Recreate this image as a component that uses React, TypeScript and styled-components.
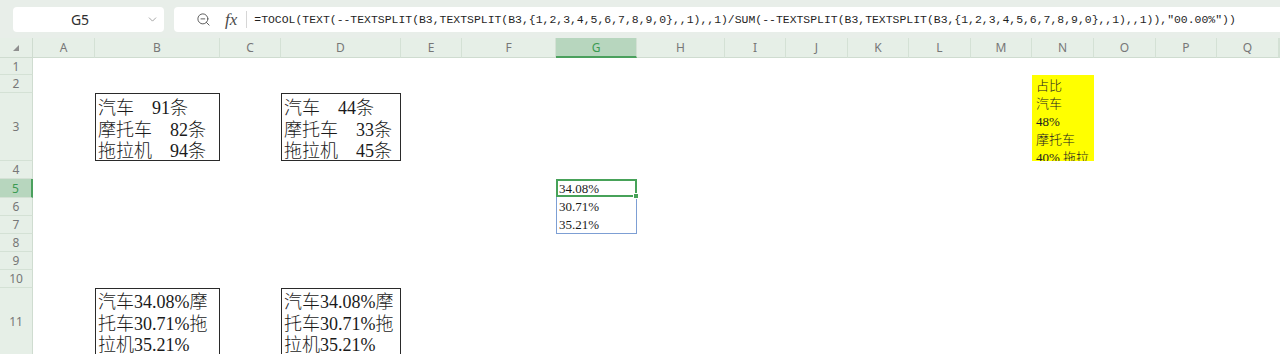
import styled, { createGlobalStyle } from "styled-components";
import { ZoomOut, ChevronDown } from "lucide-react";

const GlobalStyle = createGlobalStyle`
	html, body {
		margin: 0;
		padding: 0;
		background: #ffffff;
		overflow: hidden;
	}
	body {
		font-family: "Noto Sans", "Noto Sans CJK SC", sans-serif;
	}
`;

const COLS: { name: string; w: number }[] = [
	{ name: "A", w: 62 },
	{ name: "B", w: 125 },
	{ name: "C", w: 61 },
	{ name: "D", w: 120 },
	{ name: "E", w: 61 },
	{ name: "F", w: 94 },
	{ name: "G", w: 81 },
	{ name: "H", w: 88 },
	{ name: "I", w: 61 },
	{ name: "J", w: 62 },
	{ name: "K", w: 61 },
	{ name: "L", w: 62 },
	{ name: "M", w: 61 },
	{ name: "N", w: 62 },
	{ name: "O", w: 62 },
	{ name: "P", w: 61 },
	{ name: "Q", w: 62 },
];

const ROWS = [17, 18, 68, 18, 19, 18, 18, 18, 18, 18, 68];

const FORMULA =
	'=TOCOL(TEXT(--TEXTSPLIT(B3,TEXTSPLIT(B3,{1,2,3,4,5,6,7,8,9,0},,1),,1)/SUM(--TEXTSPLIT(B3,TEXTSPLIT(B3,{1,2,3,4,5,6,7,8,9,0},,1),,1)),"00.00%"))';

// grid area of a sheet range, e.g. area("G", 5, 3) -> G5:G7
const area = (col: string, row: number, rows = 1) => {
	const c = COLS.findIndex((x) => x.name === col) + 2;
	const r = row + 1;
	return `${r} / ${c} / ${r + rows} / ${c + 1}`;
};

const Page = styled.div`
	width: 1280px;
	height: 354px;
	overflow: hidden;
	background: #ffffff;
`;

const TopBar = styled.div`
	height: 38px;
	display: flex;
	align-items: center;
	gap: 10px;
	padding-left: 13px;
	background: #e8eee9;
	box-sizing: border-box;
`;

const NameBox = styled.div`
	width: 151px;
	height: 25px;
	display: flex;
	align-items: center;
	background: #ffffff;
	border-radius: 4px;
	box-sizing: border-box;
	padding-right: 5px;
	color: #8a8a8a;
`;

const NameText = styled.span`
	flex: 1;
	text-align: center;
	font-size: 14px;
	color: #2e2e2e;
	padding-left: 1px;
`;

const FormulaBox = styled.div`
	flex: 1;
	height: 25px;
	display: flex;
	align-items: center;
	background: #ffffff;
	border-radius: 4px 0 0 4px;
	padding-left: 22px;
	color: #555555;
	min-width: 0;
`;

const Fx = styled.span`
	margin-left: 14px;
	font-family: "Liberation Serif", serif;
	font-style: italic;
	font-size: 17px;
	color: #4a4a4a;
	line-height: 1;
`;

const Divider = styled.span`
	width: 1px;
	height: 17px;
	margin-left: 9px;
	background: #d6d6d6;
`;

const FormulaText = styled.span`
	margin-left: 7px;
	font-family: "Liberation Mono", monospace;
	font-size: 11.45px;
	color: #1f1f1f;
	white-space: pre;
`;

const Sheet = styled.div`
	display: grid;
	grid-template-columns: 33px ${COLS.map((c) => c.w + "px").join(" ")} 1fr;
	grid-template-rows: 20px ${ROWS.map((h) => h + "px").join(" ")};
	background: #ffffff;
`;

const Corner = styled.div`
	grid-area: 1 / 1 / 2 / 2;
	display: flex;
	align-items: center;
	justify-content: center;
	background: #e6efe7;
	border-right: 1px solid #cfdcd0;
	border-bottom: 1px solid #cfdcd0;
	box-sizing: border-box;
`;

const ColHeader = styled.div<{ $active?: boolean }>`
	grid-row: 1;
	display: flex;
	align-items: center;
	justify-content: center;
	font-size: 12px;
	color: ${(p) => (p.$active ? "#3b9a52" : "#777777")};
	background: ${(p) => (p.$active ? "#b7d6be" : "#e6efe7")};
	border-right: 1px solid #d4e1d5;
	border-bottom: ${(p) => (p.$active ? "2px solid #4aa05d" : "1px solid #cfdcd0")};
	box-sizing: border-box;
`;

const RowHeader = styled.div<{ $active?: boolean }>`
	grid-column: 1;
	display: flex;
	align-items: center;
	justify-content: center;
	font-size: 12px;
	color: ${(p) => (p.$active ? "#3b9a52" : "#777777")};
	background: ${(p) => (p.$active ? "#b7d6be" : "#e6efe7")};
	border-bottom: 1px solid #d4e1d5;
	border-right: ${(p) => (p.$active ? "2px solid #4aa05d" : "1px solid #cfdcd0")};
	box-sizing: border-box;
`;

const TextBox = styled.div<{ $area: string; $padTop: number }>`
	grid-area: ${(p) => p.$area};
	border: 1px solid #2a2a2a;
	padding: ${(p) => p.$padTop}px 0 0 2px;
	font-family: "Liberation Serif", "Noto Sans CJK SC", serif;
	font-weight: 300;
	font-size: 18px;
	line-height: 21.5px;
	color: #1a1a1a;
	white-space: pre;
	overflow: hidden;
	box-sizing: border-box;
`;

const ValueCell = styled.div<{ $area: string }>`
	grid-area: ${(p) => p.$area};
	display: flex;
	align-items: center;
	padding-left: 3px;
	font-family: "Liberation Serif", serif;
	font-size: 13px;
	color: #1a1a1a;
`;

const NoteCell = styled.div<{ $area: string }>`
	grid-area: ${(p) => p.$area};
	background: #ffff00;
	padding: 2px 3px 0 4px;
	font-family: "Liberation Serif", "Noto Sans CJK SC", serif;
	font-weight: 300;
	font-size: 13px;
	line-height: 18px;
	color: #222222;
	overflow: hidden;
`;

const SpillFrame = styled.div<{ $area: string }>`
	grid-area: ${(p) => p.$area};
	border: 1px solid #7d9fd4;
	box-sizing: border-box;
	pointer-events: none;
`;

const Selection = styled.div<{ $area: string }>`
	grid-area: ${(p) => p.$area};
	position: relative;
	border: 2px solid #47a259;
	box-sizing: border-box;
	margin-bottom: 1px;
	pointer-events: none;
`;

const Handle = styled.span`
	position: absolute;
	right: -4px;
	bottom: -4px;
	width: 4px;
	height: 4px;
	background: #47a259;
	border: 1px solid #ffffff;
`;

function App() {
	return (
		<Page>
			<GlobalStyle />
			<TopBar>
				<NameBox>
					<NameText>G5</NameText>
					<ChevronDown size={13} strokeWidth={1.4} />
				</NameBox>
				<FormulaBox>
					<ZoomOut size={15} strokeWidth={1.5} />
					<Fx>fx</Fx>
					<Divider />
					<FormulaText>{FORMULA}</FormulaText>
				</FormulaBox>
			</TopBar>
			<Sheet>
				<Corner>
					<svg width="6" height="6" viewBox="0 0 6 6">
						<polygon points="6,0 6,6 0,6" fill="#8f8f8f" />
					</svg>
				</Corner>
				{COLS.map((c, i) => (
					<ColHeader key={c.name} $active={c.name === "G"} style={{ gridColumn: i + 2 }}>
						{c.name}
					</ColHeader>
				))}
				<ColHeader style={{ gridColumn: COLS.length + 2 }} />
				{ROWS.map((_, i) => (
					<RowHeader key={i} $active={i + 1 === 5} style={{ gridRow: i + 2 }}>
						{i + 1}
					</RowHeader>
				))}

				<TextBox $area={area("B", 3)} $padTop={4}>
					{"汽车\u300091条\n摩托车\u300082条\n拖拉机\u300094条"}
				</TextBox>
				<TextBox $area={area("D", 3)} $padTop={4}>
					{"汽车\u300044条\n摩托车\u300033条\n拖拉机\u300045条"}
				</TextBox>

				<NoteCell $area={area("N", 2, 2)}>
					占比
					<br />
					汽车
					<br />
					48%
					<br />
					摩托车
					<br />
					40% 拖拉机 39%
				</NoteCell>

				<ValueCell $area={area("G", 5)}>34.08%</ValueCell>
				<ValueCell $area={area("G", 6)}>30.71%</ValueCell>
				<ValueCell $area={area("G", 7)}>35.21%</ValueCell>

				<TextBox $area={area("B", 11)} $padTop={3}>
					{"汽车34.08%摩\n托车30.71%拖\n拉机35.21%"}
				</TextBox>
				<TextBox $area={area("D", 11)} $padTop={3}>
					{"汽车34.08%摩\n托车30.71%拖\n拉机35.21%"}
				</TextBox>

				<SpillFrame $area={area("G", 5, 3)} />
				<Selection $area={area("G", 5)}>
					<Handle />
				</Selection>
			</Sheet>
		</Page>
	);
}

export default App;
